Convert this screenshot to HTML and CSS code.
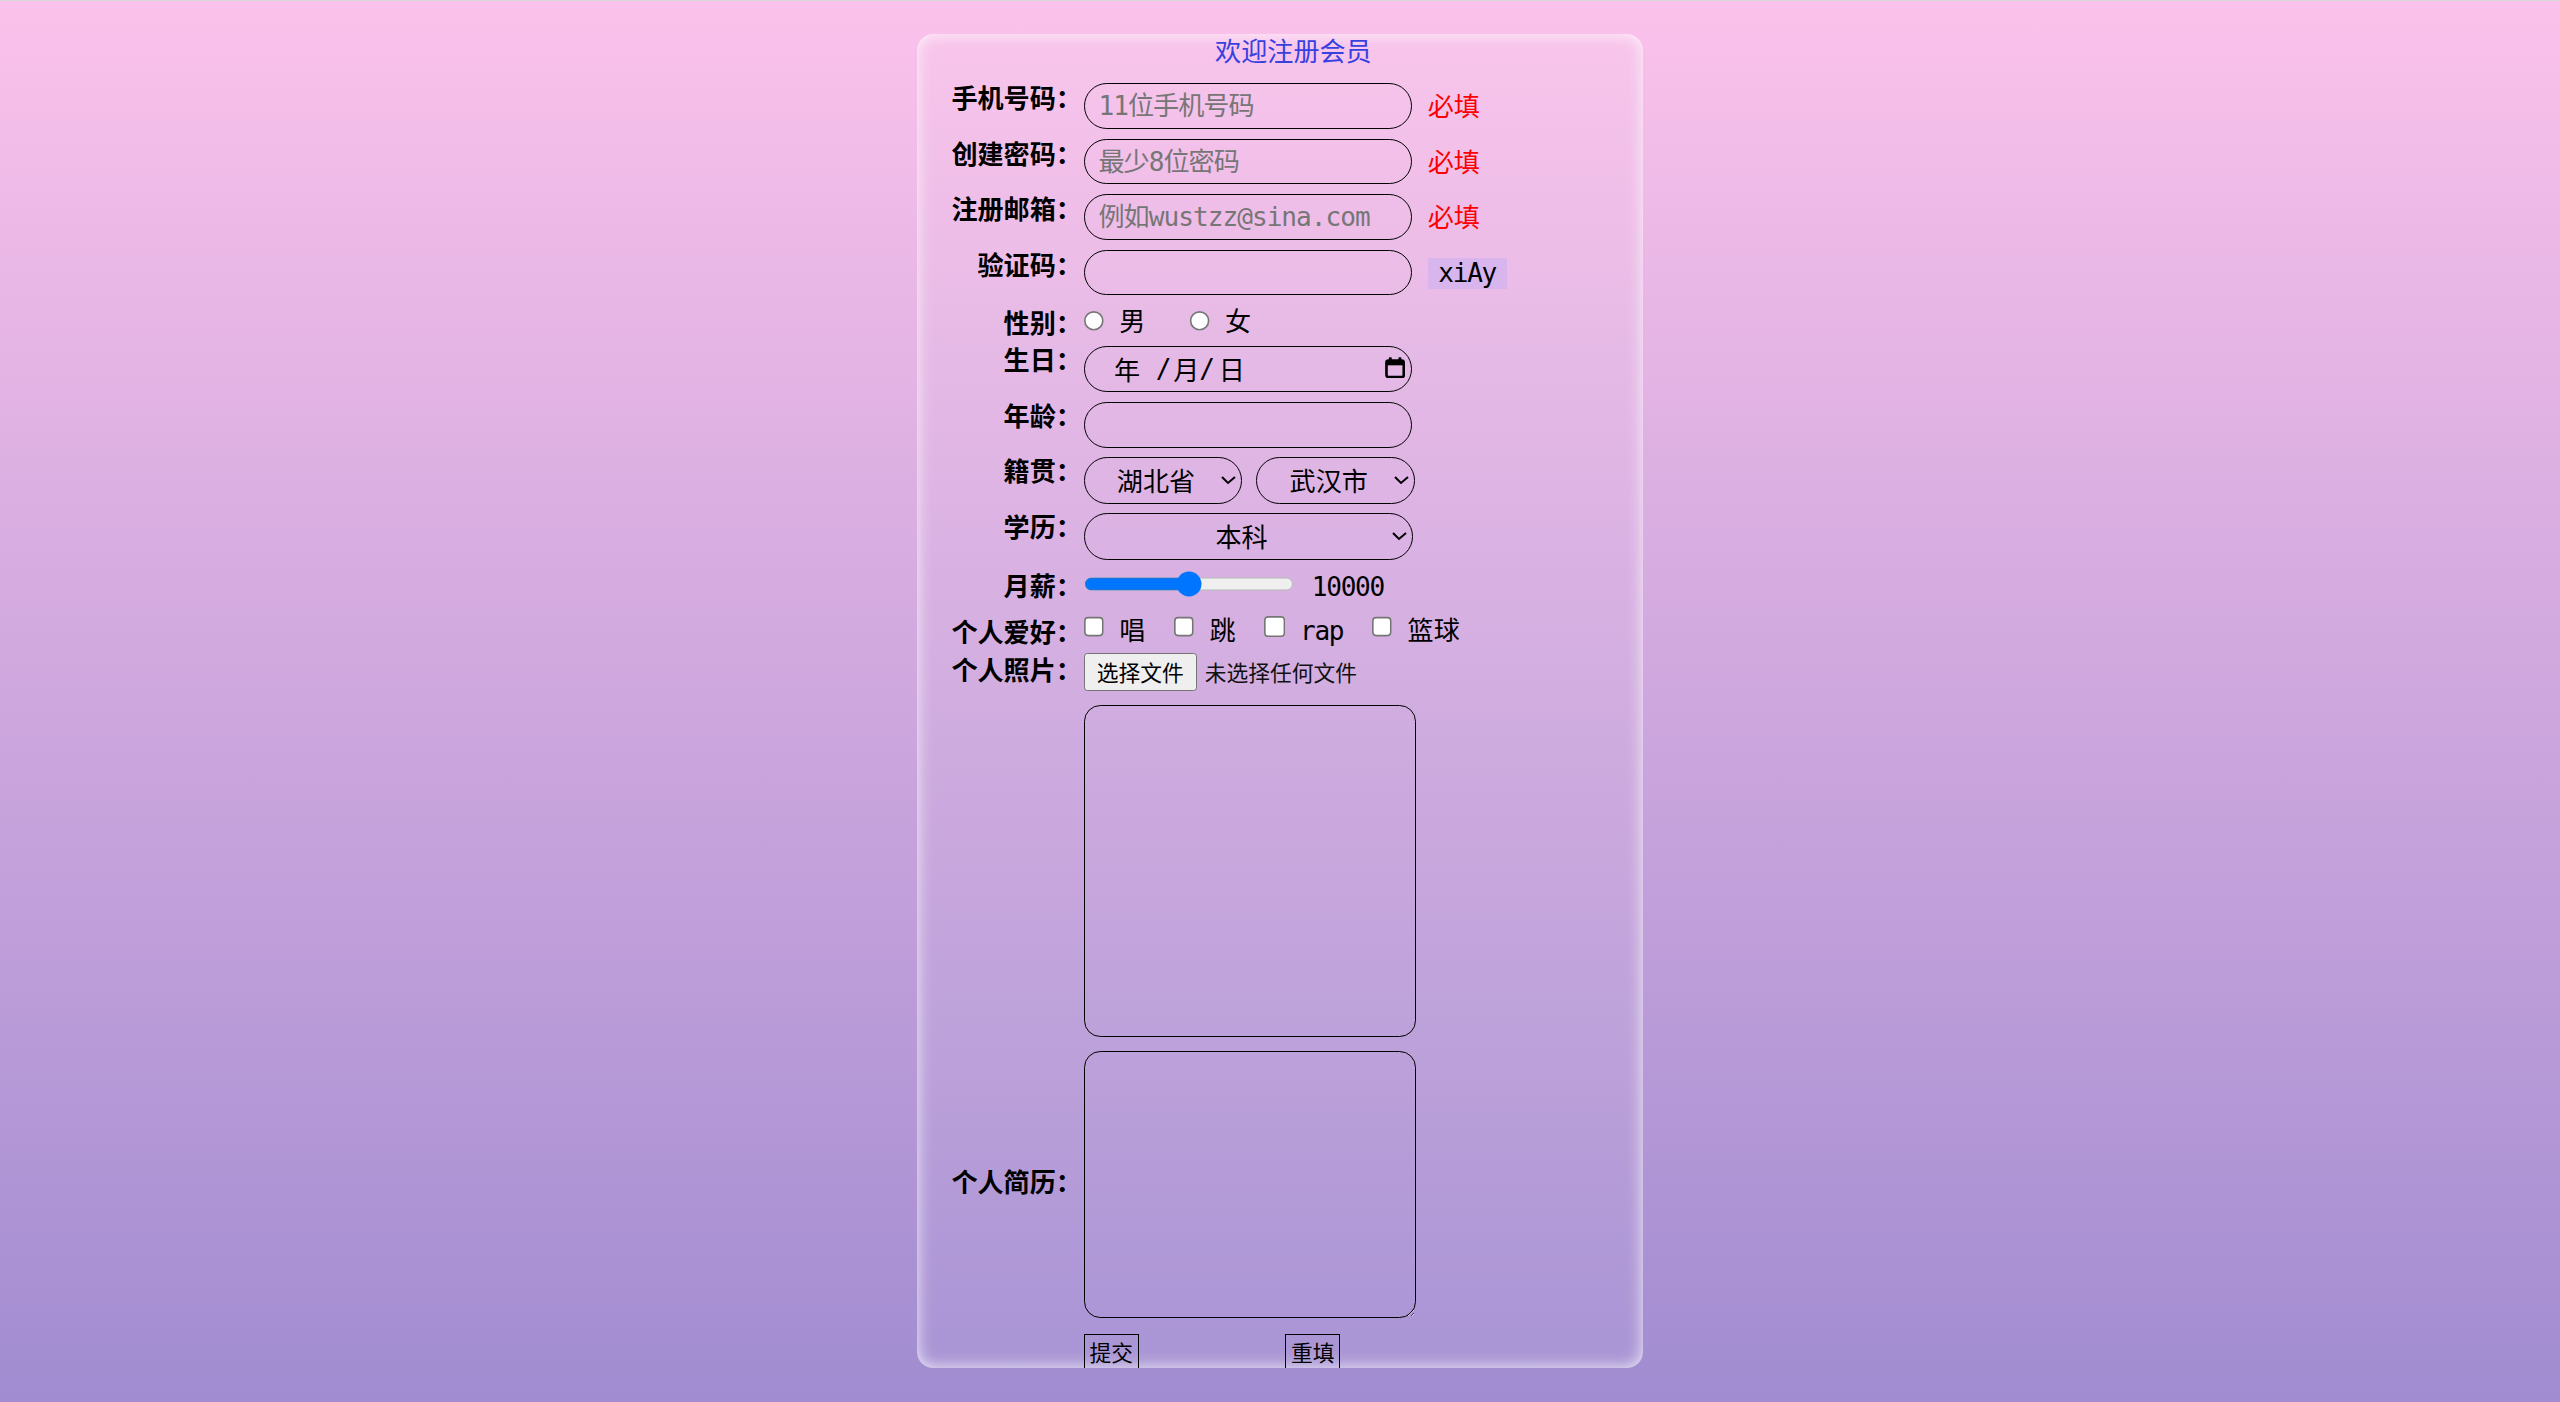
FILE: index.html
```html
<!DOCTYPE html>
<html lang="zh-CN">
<head>
<meta charset="utf-8">
<title>欢迎注册会员</title>
<link rel="stylesheet" href="styles.css">
</head>
<body>
<div class="page">
  <form class="card">
    <div class="title">欢迎注册会员</div>

    <div class="row row-first">
      <span class="lbl lbl-top">手机号码：</span>
      <input class="pill" type="text" placeholder="11位手机号码">
      <span class="note">必填</span>
    </div>
    <div class="row row-std">
      <span class="lbl lbl-top">创建密码：</span>
      <input class="pill" type="password" placeholder="最少8位密码">
      <span class="note">必填</span>
    </div>
    <div class="row row-std">
      <span class="lbl lbl-top">注册邮箱：</span>
      <input class="pill" type="text" placeholder="例如wustzz@sina.com">
      <span class="note">必填</span>
    </div>
    <div class="row row-std">
      <span class="lbl lbl-top">验证码：</span>
      <input class="pill" type="text">
      <span class="code">xiAy</span>
    </div>

    <div class="row row-gender">
      <span class="lbl">性别：</span>
      <input class="tick tick-radio" type="radio" name="sex">
      <span class="opt">男</span>
      <input class="tick tick-radio gap-r" type="radio" name="sex">
      <span class="opt">女</span>
    </div>

    <div class="row row-date">
      <span class="lbl lbl-low">生日：</span>
      <div class="pill date">
        <span>年</span><span class="slash slash-1">/</span><span class="d-m">月</span><span class="slash">/</span><span class="d-d">日</span>
        <svg class="cal" width="12.4" height="13.2" viewBox="0 0 12.4 13.2" aria-hidden="true">
          <rect x="0.9" y="2.2" width="10.6" height="10.1" rx="1.2" fill="none" stroke="#000" stroke-width="1.6"/>
          <rect x="0.9" y="2.2" width="10.6" height="2.9" fill="#000"/>
          <rect x="2.4" y="0.2" width="1.7" height="2.6" fill="#000"/>
          <rect x="8.3" y="0.2" width="1.7" height="2.6" fill="#000"/>
        </svg>
      </div>
    </div>

    <div class="row row-age">
      <span class="lbl lbl-low">年龄：</span>
      <input class="pill" type="text">
    </div>

    <div class="row row-sel">
      <span class="lbl lbl-low">籍贯：</span>
      <select class="sel">
        <option>湖北省</option>
        <option>湖南省</option>
      </select>
      <select class="sel sel-gap">
        <option>武汉市</option>
        <option>宜昌市</option>
      </select>
    </div>

    <div class="row row-sel">
      <span class="lbl lbl-low">学历：</span>
      <select class="sel sel-wide">
        <option>本科</option>
        <option>硕士</option>
      </select>
    </div>

    <div class="row row-range">
      <span class="lbl">月薪：</span>
      <input class="slider" type="range" min="0" max="20000" value="10000">
      <span class="val mono">10000</span>
    </div>

    <div class="row row-hobby">
      <span class="lbl">个人爱好：</span>
      <input class="tick tick-check" type="checkbox">
      <span class="opt">唱</span>
      <input class="tick tick-check gap-c" type="checkbox">
      <span class="opt">跳</span>
      <input class="tick tick-check gap-c" type="checkbox">
      <span class="opt mono">rap</span>
      <input class="tick tick-check gap-c" type="checkbox">
      <span class="opt">篮球</span>
    </div>

    <div class="row row-file">
      <span class="lbl">个人照片：</span>
      <button class="filebtn" type="button">选择文件</button>
      <span class="filetxt">未选择任何文件</span>
    </div>

    <div class="row row-photo">
      <span class="lbl"></span>
      <div class="photo"></div>
    </div>

    <div class="row row-resume">
      <span class="lbl lbl-mid">个人简历：</span>
      <textarea class="resume"></textarea>
    </div>

    <div class="row row-btns">
      <span class="lbl"></span>
      <button class="btn" type="submit">提交</button>
      <button class="btn btn-reset" type="reset">重填</button>
    </div>
  </form>
</div>
</body>
</html>
```

FILE: styles.css
```css
html {
  height: 100%;
  background: linear-gradient(to top, #a18cd1 0%, #fbc2eb 100%);
  box-shadow: inset 0 1px 0 #d8d8d8;
}

body {
  margin: 0;
  font-family: "DejaVu Sans Mono", "Noto Sans CJK SC", monospace;
  font-size: 16px;
  color: #000;
}

.page {
  zoom: 1.63265;
}

.card {
  display: flex;
  flex-direction: column;
  box-sizing: border-box;
  width: 444.6px;
  height: 817.3px;
  margin: 20.8px auto 0;
  padding: 0 4.6px 0 21px;
  border-radius: 10px;
  background: rgba(255, 255, 255, 0.07);
  box-shadow: inset 0 0 10px rgba(255, 255, 255, 0.85);
}

.title {
  text-align: center;
  font-family: "Noto Sans CJK SC", sans-serif;
  font-size: 16px;
  line-height: 20px;
  color: #3741e0;
}

.row {
  display: flex;
  align-items: flex-start;
}

.row-first { margin-top: 10.2px; }
.row-std { margin-top: 6px; }
.row-gender { margin-top: 5px; }
.row-date { margin-top: 3.3px; }
.row-age { margin-top: 6.1px; }
.row-sel { margin-top: 5.7px; }
.row-range { margin-top: 4.5px; }
.row-hobby { margin-top: 4px; }
.row-file { margin-top: 0.2px; }
.row-photo { margin-top: 8.6px; }
.row-resume { margin-top: 8.6px; }
.row-btns { margin-top: 9.5px; }

.lbl {
  flex: none;
  width: 80px;
  margin-right: 1px;
  text-align: right;
  white-space: nowrap;
  font-family: "Noto Sans CJK SC", sans-serif;
  font-weight: 700;
  line-height: 23px;
  min-height: 1px;
}

.lbl-top { margin-top: -2.4px; }
.lbl-low { margin-top: -3.3px; }
.lbl-mid { align-self: center; margin-top: 2px; margin-bottom: 4.8px; }

.pill {
  box-sizing: border-box;
  flex: none;
  width: 201px;
  height: 28px;
  margin: 0;
  padding: 0 7px 0 8.5px;
  border: 1px solid #000;
  border-radius: 14px;
  background: transparent;
  font-family: "DejaVu Sans Mono", "Noto Sans CJK SC", monospace;
  font-size: 16px;
  letter-spacing: -0.6px;
  color: #000;
  outline: none;
}

.pill::placeholder {
  color: #767676;
}

.note {
  margin-left: 9.8px;
  align-self: center;
  line-height: 23px;
  font-family: "Noto Sans CJK SC", sans-serif;
  color: #ff0000;
}

.code {
  margin-left: 9.7px;
  align-self: center;
  margin-top: 1px;
  padding: 0 6.6px;
  line-height: 18.8px;
  letter-spacing: -0.8px;
  background: #d8b5ec;
}

.mono {
  letter-spacing: -0.8px;
}

.tick {
  flex: none;
  width: 13px;
  height: 13px;
  margin: 0;
}

.tick-radio { margin-top: 4.3px; }
.tick-check { margin-top: 2.2px; }
.gap-r { margin-left: 27px; }
.gap-c { margin-left: 17.6px; }

.opt {
  margin-left: 8.8px;
  line-height: 23px;
  white-space: nowrap;
}

.date {
  display: flex;
  align-items: center;
  padding: 0 3.3px 0 18px;
  font-family: "Noto Sans CJK SC", sans-serif;
  letter-spacing: 0;
}

.slash {
  display: inline-block;
  width: 8.8px;
  text-align: center;
  font-family: "DejaVu Sans Mono", monospace;
}

.slash-1 { margin-left: 9.6px; }
.d-m { margin-left: 1.9px; }
.d-d { margin-left: 3.1px; }

.cal {
  margin-left: auto;
  margin-top: -2px;
}

.sel {
  box-sizing: border-box;
  flex: none;
  width: 97px;
  height: 28.6px;
  margin: 0;
  padding: 0 2px 0 6px;
  border: 1px solid #000;
  border-radius: 14.3px;
  background: transparent;
  font-family: "Noto Sans CJK SC", sans-serif;
  font-size: 16px;
  color: #000;
  text-align: center;
  text-align-last: center;
}

.sel-gap { margin-left: 8.8px; }
.sel-wide { width: 201.8px; }

.slider {
  flex: none;
  width: 129px;
  height: 16px;
  margin: 2.5px 0 0;
}

.val {
  margin-left: 10.8px;
  margin-top: 1px;
  line-height: 23px;
}

.filebtn {
  flex: none;
  box-sizing: border-box;
  width: 69.4px;
  height: 23px;
  margin: 1.5px 0 0;
  padding: 0;
  border: 1px solid #767676;
  border-radius: 2px;
  background: #efefef;
  font-family: "Noto Sans CJK SC", sans-serif;
  font-size: 13.33px;
  color: #000;
}

.filetxt {
  margin: 1.5px 0 0 4.8px;
  line-height: 23px;
  font-family: "Noto Sans CJK SC", sans-serif;
  font-size: 13.33px;
  color: #111;
}

.photo {
  flex: none;
  box-sizing: border-box;
  width: 203.8px;
  height: 203.3px;
  border: 1px solid #000;
  border-radius: 10px;
}

.resume {
  flex: none;
  display: block;
  box-sizing: border-box;
  width: 203.8px;
  height: 163.8px;
  margin: 0;
  border: 1px solid #000;
  border-radius: 10px;
  background: transparent;
  outline: none;
}

.btn {
  flex: none;
  box-sizing: border-box;
  width: 33.8px;
  height: 22.1px;
  margin: 0;
  padding: 0;
  border: 1px solid #000;
  border-radius: 0;
  background: transparent;
  font-family: "Noto Sans CJK SC", sans-serif;
  font-size: 13.33px;
  color: #000;
}

.btn-reset { margin-left: 89.7px; }
```
